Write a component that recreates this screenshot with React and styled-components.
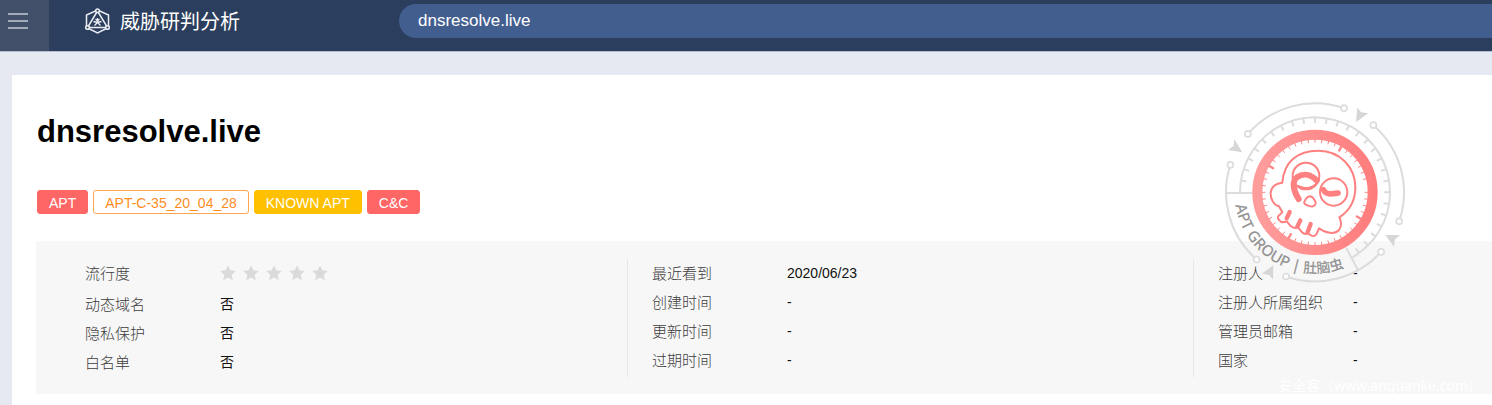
import React from "react";
import styled, { createGlobalStyle } from "styled-components";

const latin = '"Liberation Sans", Arial, "Noto Sans CJK SC", sans-serif';
const cjk = '"Noto Sans CJK SC", "Microsoft YaHei", sans-serif';

const GlobalStyle = createGlobalStyle`
  *, *::before, *::after { box-sizing: border-box; }
  body {
    margin: 0;
    background: #e6e9f2;
    color: #000;
    font-family: ${latin};
    overflow: hidden;
  }
  h1, dl, dt, dd, ul { margin: 0; padding: 0; }
`;

const Header = styled.header`
  display: flex;
  height: 51px;
  background: #2c3e5d;
  box-shadow: 0 1px 0 #b5bed1;
`;

const MenuButton = styled.button`
  flex: none;
  width: 49px;
  padding: 13px 0 0 8px;
  border: 0;
  background: #414f68;
  display: flex;
  flex-direction: column;
  gap: 5px;
`;

const MenuBar = styled.span`
  width: 20px;
  height: 2px;
  background: #a3abba;
`;

const Brand = styled.a`
  flex: none;
  display: flex;
  width: 350px;
  height: 41px;
  padding-left: 36px;
  align-items: center;
  gap: 10px;
  color: #fff;
  font-family: ${cjk};
  font-size: 20px;
  font-weight: 400;
  line-height: 24px;
  text-decoration: none;
`;

const SearchInput = styled.input`
  flex: 1;
  min-width: 0;
  height: 34px;
  margin-top: 4px;
  padding: 0 19px;
  border: 0;
  border-radius: 17px 0 0 17px;
  outline: 0;
  background: #425e8f;
  color: #fff;
  font-family: ${latin};
  font-size: 17px;
`;

const Card = styled.main`
  position: relative;
  margin: 24px 0 0 12px;
  padding: 36px 0 12px 24px;
  background: #fff;
`;

const Title = styled.h1`
  padding-left: 1px;
  font-size: 31px;
  line-height: 42px;
  font-weight: 700;
`;

const Tags = styled.ul`
  display: flex;
  gap: 5px;
  margin: 37px 0 27px;
  padding-left: 1px;
  list-style: none;
`;

const tones = {
  red: ["#ff6666", "#ff6666", "#fff"],
  outline: ["#fff", "#ffa750", "#ff8c1f"],
  yellow: ["#ffc000", "#ffc000", "#fff"],
};

const Tag = styled.li`
  height: 24px;
  padding: 0 11px;
  border: 1px solid ${(p) => tones[p.$tone][1]};
  border-radius: 3px;
  background: ${(p) => tones[p.$tone][0]};
  color: ${(p) => tones[p.$tone][2]};
  font-size: 14px;
  line-height: 24px;
  white-space: nowrap;
`;

const Panel = styled.section`
  display: grid;
  grid-template-columns: 1fr 1fr 299px;
  padding: 18px 0 17px 25px;
  background: #f7f7f7;
`;

const Column = styled.dl`
  height: 118px;
  padding-left: 24px;
  border-left: ${(p) => (p.$divided ? "1px solid #e6e6e6" : "0")};
`;

const Row = styled.div`
  display: flex;
  align-items: center;
  height: ${(p) => (p.$tall ? 31 : 29)}px;
  padding-bottom: ${(p) => (p.$tall ? 3 : 1)}px;
  line-height: 26px;
`;

const Label = styled.dt`
  flex: none;
  width: 135px;
  color: #3c3c3c;
  font-family: ${cjk};
  font-size: 15px;
  font-weight: 300;
`;

const Value = styled.dd`
  color: #111;
  font-size: 14px;
`;

const Stars = styled.span`
  display: flex;
  gap: 7px;
`;

const Stamp = styled.svg`
  position: absolute;
  top: 15px;
  right: 72px;
  width: 210px;
  height: 200px;
`;

const Watermark = styled.span`
  position: absolute;
  right: 10px;
  bottom: 10px;
  color: #fff;
  font-family: "Noto Sans", "Noto Sans CJK SC", sans-serif;
  font-size: 14px;
  line-height: 20px;
`;

function BrandIcon() {
  return (
    <svg width="25" height="26" viewBox="0 0 25 26" fill="none" stroke="#e9edf3" strokeWidth="1.500" aria-hidden="true">
      <path d="M12.500 2 L23.500 7 V19.500 L12.500 25 L1.500 19.500 V7 Z" />
      <path d="M12.500 3 L2.500 19.500 H22.500 Z" />
      <circle cx="12.500" cy="2.700" r="1.800" fill="#2c3e5d" />
      <circle cx="2.500" cy="19.500" r="1.800" fill="#2c3e5d" />
      <circle cx="22.500" cy="19.500" r="1.800" fill="#2c3e5d" />
      <path d="M12.500 10 V14.500 M10.500 11 L12.500 13 L14.500 11 M8.500 13.500 L12.500 14.500 L16.500 13.500 M9.500 17.500 L12.500 14.500 L15.500 17.500" strokeWidth="1.300" />
    </svg>
  );
}

function Star() {
  return (
    <svg width="16" height="16" viewBox="0 0 16 16" fill="#dadada" aria-hidden="true">
      <path d="M8 0.300 L10.300 5.300 L15.700 6 L11.700 9.700 L12.800 15.200 L8 12.500 L3.200 15.200 L4.300 9.700 L0.300 6 L5.700 5.300 Z" />
    </svg>
  );
}

const CX = 315;
const CY = 307;

function polar(radius, degrees) {
  const a = (degrees * Math.PI) / 180;
  return [CX + radius * Math.cos(a), CY + radius * Math.sin(a)];
}

function arc(radius, from, to) {
  const large = to - from > 180 ? 1 : 0;
  return `M${polar(radius, from).join(" ")} A${radius} ${radius} 0 ${large} 1 ${polar(radius, to).join(" ")}`;
}

function ticks(outer, inner, from, to, step) {
  let d = "";
  for (let a = from; a <= to; a += step) {
    d += `M${polar(outer, a).join(" ")} L${polar(inner, a).join(" ")} `;
  }
  return d;
}

const orbitArcs = [
  [221, 289],
  [311, 379],
  [42, 109],
  [131, 198],
];

function AptStamp() {
  return (
    <Stamp viewBox="0 0 630 600" fill="none" role="img" aria-label="APT GROUP | 肚脑虫">
      <defs>
        <linearGradient id="ring" x1="0" y1="0" x2="1" y2="0">
          <stop offset="0" stopColor="#ff9d9d" />
          <stop offset="1" stopColor="#ff7d7d" />
        </linearGradient>
        <path id="motto" d="M73 307 A242 242 0 0 0 557 307" />
      </defs>
      <g stroke="#dcdcdc" strokeWidth="6">
        {orbitArcs.map(([from, to]) => (
          <path key={from} d={arc(267, from, to)} />
        ))}
        <path d={arc(225, 180, 420)} />
        <path d={ticks(225, 208, 189, 414, 9)} />
        <path d="M46 309 H130 M409 474 L445 542" />
      </g>
      <g fill="#fff" stroke="#dcdcdc" strokeWidth="5">
        {orbitArcs.flat().map((a) => {
          const [x, y] = polar(267, a);
          return <circle key={a} cx={x} cy={y} r="9" />;
        })}
      </g>
      <g fill="#d6d6d6">
        <path d="M438 96 L442 52 L453 67 L475 70 Z" />
        <path d="M97 187 L73 148 L71 168 L54 180 Z" />
        <path d="M526 435 L571 436 L555 448 L552 470 Z" />
        <path d="M190 526 L155 551 L176 554 L189 568 Z" />
      </g>
      <circle cx={CX} cy={CY} r="173" fill="#fff" stroke="url(#ring)" strokeWidth="30" />
      <g stroke="#ff8585">
        <path d={ticks(160, 149, 0, 352, 7.5)} strokeWidth="3" />
        <path d={ticks(160, 142, 30, 300, 90)} strokeWidth="7" />
      </g>
      <g stroke="#ff8080" strokeWidth="6" strokeLinecap="round" strokeLinejoin="round">
        <path d="M217 278 C222 215 262 182 325 182 C392 182 436 234 436 292 C436 335 415 365 388 382 C395 397 394 411 387 420 C374 434 346 430 327 415 L319 433 Q313 441 303 436 L293 430 Q285 434 277 428 L263 411 Q252 417 243 409 L230 394 Q215 401 207 390 Q201 383 206 377 L217 367 L207 349 C190 345 181 325 182 308 C184 290 198 280 217 278 Z" />
        <circle cx="288" cy="258" r="40" />
        <path d="M264 288 Q300 305 325 275" />
        <circle cx="371" cy="306" r="41" />
        <path d="M300 319 C308 320 317 331 317 340 C315 350 304 351 294 347 C284 344 280 339 284 333 C288 326 294 319 300 319 Z" />
        <path d="M239 366 L230 385 M271 391 L262 410 M302 402 L293 426" strokeWidth="13" />
        <path d="M266 327 C249 301 245 272 262 261 C281 248 303 254 320 271" strokeWidth="18" />
        <path d="M340 299 C348 316 366 312 384 309" strokeWidth="17" />
      </g>
      <text fill="#949494" fontFamily={`"Noto Sans", ${cjk}`} fontSize="46" fontWeight="500">
        <textPath href="#motto" startOffset="38">
          APT GROUP | <tspan fontSize="42">肚脑虫</tspan>
        </textPath>
      </text>
    </Stamp>
  );
}

const columns = [
  [
    ["流行度", <Stars key="stars">{[1, 2, 3, 4, 5].map((n) => <Star key={n} />)}</Stars>],
    ["动态域名", "否"],
    ["隐私保护", "否"],
    ["白名单", "否"],
  ],
  [
    ["最近看到", "2020/06/23"],
    ["创建时间", "-"],
    ["更新时间", "-"],
    ["过期时间", "-"],
  ],
  [
    ["注册人", "-"],
    ["注册人所属组织", "-"],
    ["管理员邮箱", "-"],
    ["国家", "-"],
  ],
];

export default function App() {
  return (
    <>
      <GlobalStyle />
      <Header>
        <MenuButton type="button" aria-label="菜单">
          <MenuBar />
          <MenuBar />
          <MenuBar />
        </MenuButton>
        <Brand href="#">
          <BrandIcon />
          威胁研判分析
        </Brand>
        <SearchInput type="text" aria-label="搜索" defaultValue="dnsresolve.live" />
      </Header>
      <Card>
        <Title>dnsresolve.live</Title>
        <Tags>
          <Tag $tone="red">APT</Tag>
          <Tag $tone="outline">APT-C-35_20_04_28</Tag>
          <Tag $tone="yellow">KNOWN APT</Tag>
          <Tag $tone="red">C&amp;C</Tag>
        </Tags>
        <Panel>
          {columns.map((rows, c) => (
            <Column key={c} $divided={c > 0}>
              {rows.map(([label, value], r) => (
                <Row key={label} $tall={c === 0 && r === 0}>
                  <Label>{label}</Label>
                  <Value>{value}</Value>
                </Row>
              ))}
            </Column>
          ))}
        </Panel>
        <AptStamp />
        <Watermark>安全客（www.anquanke.com）</Watermark>
      </Card>
    </>
  );
}
